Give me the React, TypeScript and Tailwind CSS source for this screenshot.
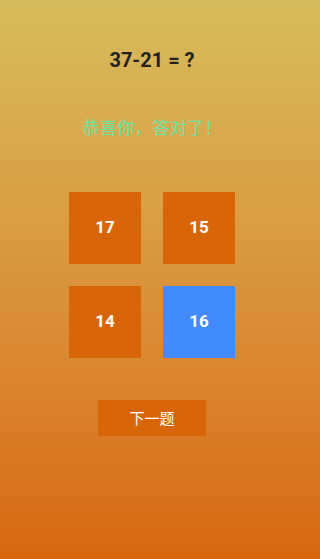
import React, { useState } from "react";

const options = [17, 15, 14, 16];

const App = () => {
  const [picked, setPicked] = useState<number | null>(16);
  const answer = 16;

  return (
    <div
      className="min-h-[559px] w-full flex flex-col items-center bg-gradient-to-b from-[#d6bd5c] to-[#d8670e] pt-[46px] pr-4"
      style={{ fontFamily: "Roboto, 'Noto Sans CJK SC', sans-serif" }}
    >
      <h1 className="text-[20px] leading-[28px] font-bold text-[#222222]">37-21 = ?</h1>
      <p className="mt-[42px] text-[17.5px] leading-[24px] text-[#6fe2a2]">
        {picked === answer ? "恭喜你，答对了！" : "\u00a0"}
      </p>
      <div className="mt-[52px] grid grid-cols-2 gap-[22px]">
        {options.map((n) => (
          <button
            key={n}
            type="button"
            onClick={() => setPicked(n)}
            className={
              (picked === n ? "bg-[#448aff]" : "bg-[#d86507]") +
              " w-[72px] h-[72px] flex items-center justify-center text-white text-[17px] font-bold"
            }
          >
            {n}
          </button>
        ))}
      </div>
      <button
        type="button"
        onClick={() => setPicked(null)}
        className="mt-[42px] w-[108px] h-[36px] pt-[2px] bg-[#d86507] text-white text-[15px] flex items-center justify-center"
      >
        下一题
      </button>
    </div>
  );
};

export default App;
